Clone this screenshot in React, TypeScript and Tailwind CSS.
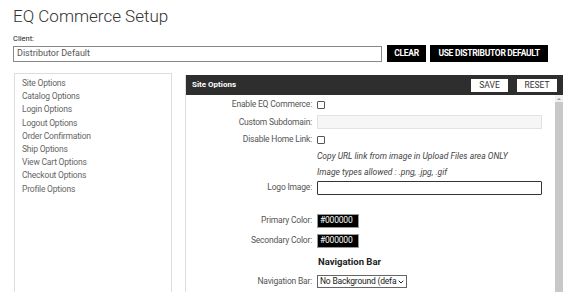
import { ChevronDown } from "lucide-react";

const menu = [
  "Site Options",
  "Catalog Options",
  "Login Options",
  "Logout Options",
  "Order Confirmation",
  "Ship Options",
  "View Cart Options",
  "Checkout Options",
  "Profile Options",
];

function Checkbox() {
  return <span className="block w-[8px] h-[8px] border border-[#555] rounded-[1px] bg-white" />;
}

function ColorBox() {
  return (
    <span className="flex items-center w-[42px] h-[14px] bg-black border border-[#999] px-[2px] text-white text-[8.5px] tracking-[-0.2px]">
      #000000
    </span>
  );
}

function Row({ label, h, children }: { label?: string; h: string; children?: React.ReactNode }) {
  return (
    <div className={`grid grid-cols-[126px_1fr] gap-x-[5px] items-center ${h}`}>
      <span className="text-right text-[8.5px] tracking-[-0.2px] text-[#555]">{label}</span>
      <div className="flex items-center">{children}</div>
    </div>
  );
}

export default function App() {
  return (
    <div className="w-[567px] h-[292px] overflow-hidden bg-white pl-[13px] pr-[4px] font-['Roboto',sans-serif] text-[#333]">
      <h1 className="pt-[5px] text-[17px] leading-[22px] font-light text-[#333]">EQ Commerce Setup</h1>
      <div className="mt-[7px] text-[7.5px] leading-[9px] text-[#222]">Client:</div>
      <div className="mt-[2px] flex items-center gap-[4px]">
        <div className="w-[369px] h-[16px] border border-[#888] flex items-center px-[3px] text-[9px] text-[#555]">
          Distributor Default
        </div>
        <button className="ml-[1px] h-[17px] w-[39px] bg-black text-white text-[8.5px] tracking-[-0.3px] font-bold">
          CLEAR
        </button>
        <button className="h-[17px] w-[118px] bg-black text-white text-[8.5px] tracking-[-0.3px] font-bold">
          USE DISTRIBUTOR DEFAULT
        </button>
      </div>

      <div className="mt-[11px] flex items-start gap-[13px] pl-[1px]">
        <div className="w-[158px] h-[240px] shrink-0 border border-[#ddd] pt-[3px] pl-[7px]">
          {menu.map((m) => (
            <div key={m} className="h-[13.2px] leading-[13px] text-[8.5px] tracking-[-0.2px] text-[#666]">
              {m}
            </div>
          ))}
        </div>

        <div className="mt-[2px] w-[378px] h-[240px] shrink-0 border-l border-[#ddd] flex flex-col">
          <div className="h-[20px] bg-[#2e2e2e] flex items-center justify-between pl-[6px] pr-[6px]">
            <span className="text-white text-[8px] font-bold">Site Options</span>
            <div className="flex items-center gap-[9px]">
              <button className="w-[37px] h-[13px] bg-white text-[8.5px] text-[#333]">SAVE</button>
              <button className="w-[40px] h-[13px] bg-white text-[8.5px] text-[#333]">RESET</button>
            </div>
          </div>
          <div className="flex flex-1">
            <div className="flex-1 flex flex-col pt-[1px]">
              <Row label="Enable EQ Commerce:" h="h-[17px]">
                <Checkbox />
              </Row>
              <Row label="Custom Subdomain:" h="h-[18px]">
                <span className="block w-[225px] h-[14px] bg-[#f6f6f6] border border-[#e2e2e2]" />
              </Row>
              <Row label="Disable Home Link:" h="h-[17px]">
                <Checkbox />
              </Row>
              <Row h="h-[16px]">
                <span className="italic text-[8.5px] text-[#444]">Copy URL link from image in Upload Files area ONLY</span>
              </Row>
              <Row h="h-[16px]">
                <span className="italic text-[8.5px] text-[#444]">Image types allowed : .png, .jpg, .gif</span>
              </Row>
              <Row label="Logo Image:" h="h-[15px]">
                <span className="block w-[225px] h-[14px] border border-[#333] rounded-[1px]" />
              </Row>
              <div className="h-[17px]" />
              <Row label="Primary Color:" h="h-[17px]">
                <ColorBox />
              </Row>
              <Row label="Secondary Color:" h="h-[23px]">
                <ColorBox />
              </Row>
              <Row h="h-[21px]">
                <span className="text-[9.5px] font-bold text-[#222] pl-[1px]">Navigation Bar</span>
              </Row>
              <Row label="Navigation Bar:" h="h-[17px]">
                <span className="flex items-center gap-[1px] h-[13px] border border-[#666] pl-[2px] pr-[1px] text-[8.5px] tracking-[-0.2px] text-[#222] whitespace-nowrap">
                  No Background (defa
                  <ChevronDown className="w-[8px] h-[8px] shrink-0" strokeWidth={3} />
                </span>
              </Row>
            </div>
            <div className="w-[8px] bg-[#c8c8c8] flex flex-col">
              <div className="h-[7px] bg-[#f0f0f0] flex items-center justify-center">
                <span className="block w-0 h-0 border-l-[2px] border-r-[2px] border-b-[2px] border-l-transparent border-r-transparent border-b-[#999]" />
              </div>
            </div>
          </div>
        </div>
      </div>
    </div>
  );
}
